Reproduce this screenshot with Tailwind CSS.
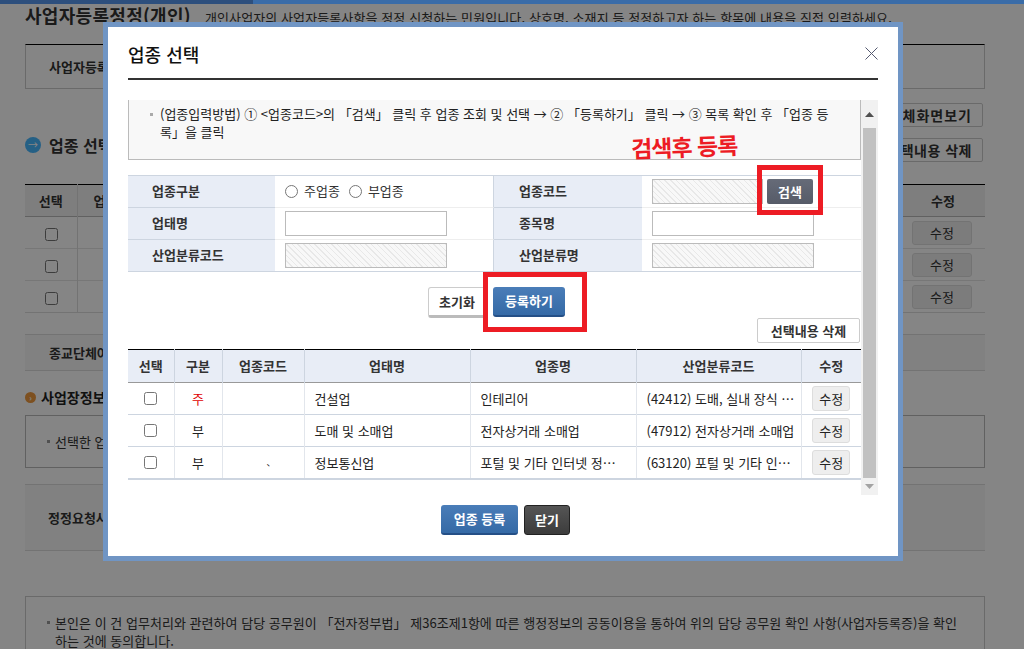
<!DOCTYPE html>
<html lang="ko">
<head>
  <meta charset="UTF-8">
  <title>업종 선택</title>
  <script src="https://cdn.jsdelivr.net/npm/@tailwindcss/browser@4"></script>
</head>
<body class="font-['Noto_Sans_CJK_KR','Liberation_Sans',sans-serif] text-[13px] text-[#333]">
<div class="relative w-[1024px] h-[649px] overflow-hidden bg-white">

  <!-- page behind the dialog -->
  <div class="relative z-10 flex h-1 bg-[#3a6ca8]">
    <div class="w-[253px] bg-[#2d4f7d]"></div>
  </div>
  <div class="w-[960px] ml-[25px]">
    <div class="flex items-center h-[21px] whitespace-nowrap">
      <h1 class="text-[18px] font-bold leading-none tracking-[.3px]">사업자등록정정(개인)</h1>
      <p class="ml-[14px] pt-[5px] text-[13px] leading-none tracking-[.1px]">개인사업자의 사업자등록사항을 정정 신청하는 민원입니다. 상호명, 소재지 등 정정하고자 하는 항목에 내용을 직접 입력하세요.</p>
    </div>
    <div class="mt-[19px] h-[45px] flex items-center pl-[23px] border border-[#ccc] border-t-black font-bold">사업자등록번호</div>

    <div class="flex justify-between h-[73px] pt-[14px]">
      <div class="flex items-center gap-2 h-[36px] self-end mb-[-1px]">
        <span class="flex items-center justify-center w-4 h-4 rounded-full bg-[#48b8ff] text-white text-[10px] leading-none">→</span>
        <span class="text-[16px] font-bold">업종 선택</span>
      </div>
      <div class="flex flex-col items-end gap-[11px] mr-[2px]">
        <button class="px-[10px] h-6 border border-[#ccc] rounded-[2px] font-bold bg-white text-[14px] leading-none tracking-[1px]">전체화면보기</button>
        <button class="px-[10px] h-6 border border-[#ccc] rounded-[2px] font-bold bg-white text-[14px] leading-none tracking-[.5px]">선택내용 삭제</button>
      </div>
    </div>

    <table class="mt-[22px] w-full table-fixed border-collapse border-t border-black">
      <tr class="h-8 bg-[#f2f2f2] border-b border-[#bbb] font-bold">
        <th class="w-[52px] border-r border-[#ddd]">선택</th><th class="w-[826px] text-left pl-4">업종코드</th><th class="pr-[2px]">수정</th>
      </tr>
      <tr class="h-8 border-b border-[#e5e5e5]">
        <td class="text-center border-r border-[#ddd]"><input type="checkbox" class="align-middle ml-px"></td><td></td>
        <td><button class="w-[60px] h-6 ml-[9px] bg-[#eee] border border-[#ddd] rounded-[3px]">수정</button></td>
      </tr>
      <tr class="h-8 border-b border-[#e5e5e5]">
        <td class="text-center border-r border-[#ddd]"><input type="checkbox" class="align-middle ml-px"></td><td></td>
        <td><button class="w-[60px] h-6 ml-[9px] bg-[#eee] border border-[#ddd] rounded-[3px]">수정</button></td>
      </tr>
      <tr class="h-8 border-b border-[#ddd]">
        <td class="text-center border-r border-[#ddd]"><input type="checkbox" class="align-middle ml-px"></td><td></td>
        <td><button class="w-[60px] h-6 ml-[9px] bg-[#eee] border border-[#ddd] rounded-[3px]">수정</button></td>
      </tr>
    </table>

    <div class="mt-[21px] h-[37px] flex items-center pl-6 bg-[#f8f8f8] border-y border-[#ddd] font-bold">종교단체여부</div>
    <div class="mt-[18px] h-[17px] flex items-center gap-[5px] font-bold text-[14px] text-[#222]">
      <span class="flex items-center justify-center w-[11px] h-[11px] rounded-full bg-[#f09a3e] text-white text-[8px] leading-none">›</span>
      <span>사업장정보</span>
    </div>
    <div class="mt-[9px] h-[53px] flex items-center pl-[21px] gap-[5px] border border-[#bbb]">
      <span class="w-[3px] h-[3px] bg-[#999]"></span><span>선택한 업종</span>
    </div>
    <div class="mt-[16px] h-[67px] flex items-center pl-[23px] bg-[#f8f8f8] border-y border-[#ddd] font-bold">정정요청사유</div>
    <div class="mt-[45px] h-[80px] pt-[17px] pl-[21px] border border-[#ccc] leading-[18px]">
      <div class="flex gap-[5px] whitespace-nowrap">
        <span class="w-[3px] h-[3px] mt-[7px] bg-[#999]"></span>
        <p class="tracking-[.03px]">본인은 이 건 업무처리와 관련하여 담당 공무원이 「전자정부법」 제36조제1항에 따른 행정정보의 공동이용을 통하여 위의 담당 공무원 확인 사항(사업자등록증)을 확인<br>하는 것에 동의합니다.</p>
      </div>
    </div>
  </div>

  <!-- backdrop -->
  <div class="absolute inset-0 bg-black/[.48]"></div>

  <!-- dialog -->
  <div class="absolute left-[103px] top-[22px] w-[800px] h-[539px] border-[5px] border-[#7095c4] bg-white px-5">
    <div class="relative h-[53px] border-b-2 border-[#333]">
      <h2 class="pt-[14px] text-[18px] font-medium leading-[26px] text-[#111]">업종 선택</h2>
      <svg class="absolute right-0 top-[20px]" width="13" height="13" viewBox="0 0 13 13" fill="none" stroke="#555a70" stroke-width="1"><path d="M0.5 0.5 12.5 12.5M12.5 0.5 0.5 12.5"/></svg>
    </div>

    <div class="flex mt-5 h-[395px]">
      <div class="w-[733px]">
        <div class="h-[60px] pt-[5px] pl-[21px] bg-[#f8f8f8] border-x border-b border-[#bbb] leading-[18px] text-[#222] flex gap-[7px]">
          <span class="w-[3px] h-[3px] mt-[8px] shrink-0 bg-[#aaa]"></span>
          <p class="whitespace-nowrap">(업종입력방법) ① &lt;업종코드&gt;의 「검색」 클릭 후 업종 조회 및 선택 → ② 「등록하기」 클릭 → ③ 목록 확인 후 「업종 등<br>록」을 클릭</p>
        </div>

        <div class="mt-[15px] grid grid-cols-[147px_219px_148px_219px] grid-rows-[32px_32px_32px] border-t border-[#cdd5e0]">
          <div class="flex items-center pl-6 pb-px bg-[#e8edf6] border-b border-[#cdd5e0] font-bold">업종구분</div>
          <div class="flex items-center pl-[10px] pb-px border-b border-[#eee] border-r border-r-[#cdd5e0]">
            <input type="radio" name="kind" class="w-[13px] h-[13px] m-0">
            <span class="ml-[6px]">주업종</span>
            <input type="radio" name="kind" class="w-[13px] h-[13px] m-0 ml-[9px]">
            <span class="ml-[6px]">부업종</span>
          </div>
          <div class="flex items-center pl-[25px] pb-px bg-[#e8edf6] border-b border-[#cdd5e0] font-bold">업종코드</div>
          <div class="flex items-center pl-[10px] border-b border-[#eee]">
            <div class="w-[111px] h-[25px] border border-[#bbb] bg-[repeating-linear-gradient(45deg,#e8e8e8_0,#e8e8e8_1px,#f8f8f8_1px,#f8f8f8_4px)]"></div>
            <button class="ml-1 w-[46px] h-[25px] rounded-[2px] bg-gradient-to-b from-[#666b78] to-[#565b68] text-white font-bold">검색</button>
          </div>

          <div class="flex items-center pl-6 pb-px bg-[#e8edf6] border-b border-[#cdd5e0] font-bold">업태명</div>
          <div class="flex items-center pl-[10px] border-b border-[#eee] border-r border-r-[#cdd5e0]">
            <input type="text" class="w-[162px] h-[25px] border border-[#bbb] bg-white">
          </div>
          <div class="flex items-center pl-[25px] pb-px bg-[#e8edf6] border-b border-[#cdd5e0] font-bold">종목명</div>
          <div class="flex items-center pl-[10px] border-b border-[#eee]">
            <input type="text" class="w-[162px] h-[25px] border border-[#bbb] bg-white">
          </div>

          <div class="flex items-center pl-6 pb-px bg-[#e8edf6] border-b border-[#cdd5e0] font-bold">산업분류코드</div>
          <div class="flex items-center pl-[10px] border-b border-[#cdd5e0] border-r border-r-[#cdd5e0]">
            <div class="w-[162px] h-[25px] border border-[#bbb] bg-[repeating-linear-gradient(45deg,#e8e8e8_0,#e8e8e8_1px,#f8f8f8_1px,#f8f8f8_4px)]"></div>
          </div>
          <div class="flex items-center pl-[25px] pb-px bg-[#e8edf6] border-b border-[#cdd5e0] font-bold">산업분류명</div>
          <div class="flex items-center pl-[10px] border-b border-[#cdd5e0]">
            <div class="w-[162px] h-[25px] border border-[#bbb] bg-[repeating-linear-gradient(45deg,#e8e8e8_0,#e8e8e8_1px,#f8f8f8_1px,#f8f8f8_4px)]"></div>
          </div>
        </div>

        <div class="mt-[15px] ml-[300px] flex gap-[7px]">
          <button class="w-[58px] h-[31px] rounded-[3px] border border-[#ccc] border-b-[3px] border-b-[#bbb] bg-white font-bold">초기화</button>
          <button class="w-[72px] h-[30px] rounded-[3px] border-b-2 border-b-[#244f86] bg-gradient-to-b from-[#4a7db8] to-[#356aa6] text-white font-bold">등록하기</button>
        </div>

        <div class="flex justify-end mr-px">
          <button class="w-[103px] h-[25px] rounded-[2px] border border-[#ccc] bg-white font-bold">선택내용 삭제</button>
        </div>

        <table class="mt-[6px] w-[733px] table-fixed border-collapse border-t border-black">
          <thead>
            <tr class="h-[33px] bg-[#e8edf6] border-b border-[#999] font-bold">
              <th class="w-[46px] border-r border-[#cdd5e0]">선택</th>
              <th class="w-[48px] border-r border-[#cdd5e0]">구분</th>
              <th class="w-[82px] border-r border-[#cdd5e0]">업종코드</th>
              <th class="w-[166px] border-r border-[#cdd5e0]">업태명</th>
              <th class="w-[166px] border-r border-[#cdd5e0]">업종명</th>
              <th class="w-[165px] border-r border-[#cdd5e0]">산업분류코드</th>
              <th>수정</th>
            </tr>
          </thead>
          <tbody class="text-[#222]">
            <tr class="h-8 border-b border-[#cdd5e0]">
              <td class="border-r border-[#e2e6ec]"><input type="checkbox" class="block mx-auto"></td>
              <td class="text-center border-r border-[#e2e6ec] text-[#e00000]">주</td>
              <td class="border-r border-[#e2e6ec]"></td>
              <td class="pl-[10px] border-r border-[#e2e6ec]">건설업</td>
              <td class="pl-[10px] border-r border-[#e2e6ec]">인테리어</td>
              <td class="pl-[10px] border-r border-[#e2e6ec] whitespace-nowrap">(42412) 도배, 실내 장식 …</td>
              <td class="text-center"><button class="w-[38px] h-[25px] bg-[#eee] border border-[#ddd] rounded-[3px]">수정</button></td>
            </tr>
            <tr class="h-8 border-b border-[#cdd5e0]">
              <td class="border-r border-[#e2e6ec]"><input type="checkbox" class="block mx-auto"></td>
              <td class="text-center border-r border-[#e2e6ec]">부</td>
              <td class="border-r border-[#e2e6ec]"></td>
              <td class="pl-[10px] border-r border-[#e2e6ec]">도매 및 소매업</td>
              <td class="pl-[10px] border-r border-[#e2e6ec]">전자상거래 소매업</td>
              <td class="pl-[10px] border-r border-[#e2e6ec] whitespace-nowrap">(47912) 전자상거래 소매업</td>
              <td class="text-center"><button class="w-[38px] h-[25px] bg-[#eee] border border-[#ddd] rounded-[3px]">수정</button></td>
            </tr>
            <tr class="h-8 border-b-2 border-[#cdd5e0]">
              <td class="border-r border-[#e2e6ec]"><input type="checkbox" class="block mx-auto"></td>
              <td class="text-center border-r border-[#e2e6ec]">부</td>
              <td class="text-center pl-[16px] border-r border-[#e2e6ec] text-[9px]">、</td>
              <td class="pl-[10px] border-r border-[#e2e6ec]">정보통신업</td>
              <td class="pl-[10px] border-r border-[#e2e6ec] whitespace-nowrap">포털 및 기타 인터넷 정…</td>
              <td class="pl-[10px] border-r border-[#e2e6ec] whitespace-nowrap">(63120) 포털 및 기타 인…</td>
              <td class="text-center"><button class="w-[38px] h-[25px] bg-[#eee] border border-[#ddd] rounded-[3px]">수정</button></td>
            </tr>
          </tbody>
        </table>
      </div>

      <!-- scrollbar -->
      <div class="w-[17px] bg-[#f1f1f1] flex flex-col items-center">
        <div class="h-7 flex items-center">
          <svg width="9" height="5" viewBox="0 0 9 5"><path d="M4.5 0 9 5H0z" fill="#505050"/></svg>
        </div>
        <div class="w-[13px] h-[350px] bg-[#c1c1c1]"></div>
        <div class="h-[17px] flex items-center">
          <svg width="9" height="5" viewBox="0 0 9 5"><path d="M0 0H9L4.5 5z" fill="#a3a3a3"/></svg>
        </div>
      </div>
    </div>

    <div class="mt-[10px] ml-[313px] flex gap-[6px]">
      <button class="w-[77px] h-[30px] rounded-[3px] border-b-2 border-b-[#244f86] bg-gradient-to-b from-[#4a7db8] to-[#356aa6] text-white font-bold">업종 등록</button>
      <button class="w-[46px] h-[30px] rounded-[3px] border border-[#222] bg-gradient-to-b from-[#555] to-[#3c3c3c] text-white font-bold">닫기</button>
    </div>
  </div>

  <!-- red marks added on the screenshot -->
  <div class="absolute left-[757px] top-[165px] w-[66px] h-[50px] border-[5px] border-[#ed1c24]"></div>
  <div class="absolute left-[483px] top-[272px] w-[104px] h-[60px] border-[5px] border-[#ed1c24]"></div>
  <div class="absolute left-[631px] top-[129px] text-[23px] font-bold leading-[34px] tracking-[-1px] text-[#ed1c24] whitespace-nowrap -rotate-2">검색후 등록</div>
</div>
</body>
</html>
